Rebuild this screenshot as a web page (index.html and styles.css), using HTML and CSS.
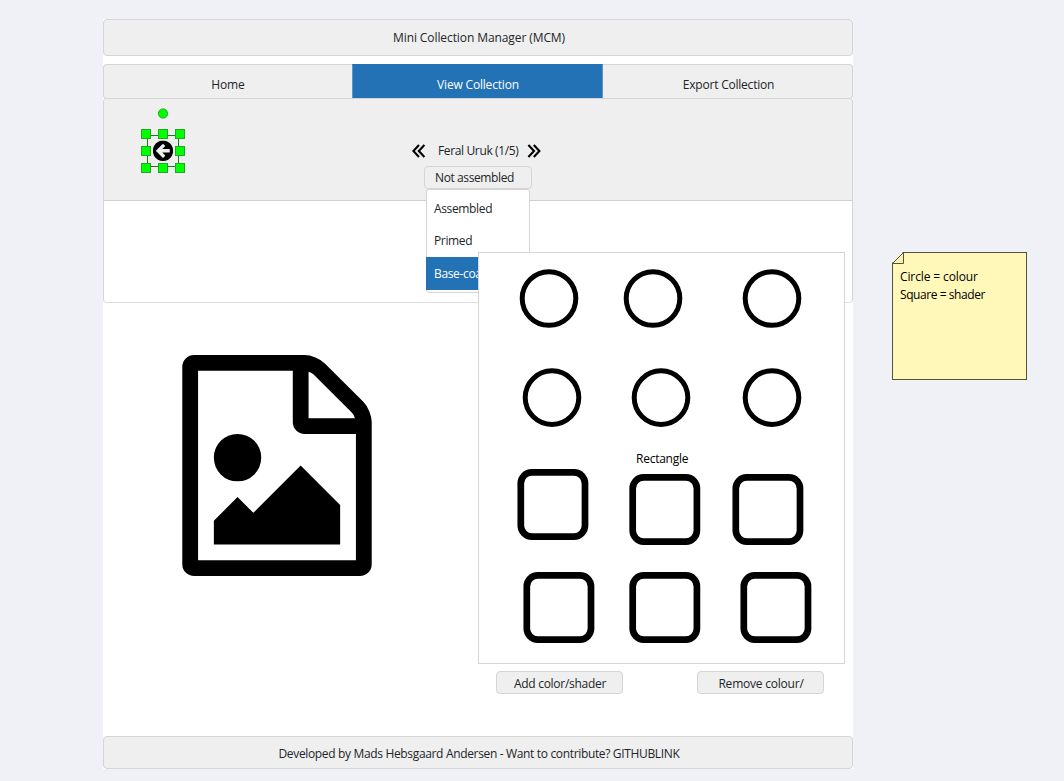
FILE: index.html
```html
<!DOCTYPE html>
<html lang="en">
<head>
<meta charset="utf-8">
<title>Mini Collection Manager (MCM)</title>
<link rel="stylesheet" href="styles.css">
</head>
<body>
<main class="page">
  <header class="bar title-bar"><span class="t-title">Mini Collection Manager (MCM)</span></header>
  <nav class="tabs">
    <a class="tab tab-first"><span class="t-home">Home</span></a>
    <a class="tab tab-active"><span class="t-view">View Collection</span></a>
    <a class="tab tab-last"><span class="t-export">Export Collection</span></a>
  </nav>
  <section class="card">
    <div class="card-head">
      <svg class="selection" width="48" height="68" viewBox="139 107 48 68">
        <rect class="sel-line" x="147.5" y="135.5" width="31" height="31"/>
        <svg x="152.8" y="140.6" width="20.4" height="20.4" viewBox="0 0 1536 1536"><path d="M1280 832v-128q0-26-19-45t-45-19h-502l189-189q19-19 19-45t-19-45l-91-91q-18-18-45-18t-45 18l-362 362-91 91q-18 18-18 45t18 45l91 91 362 362q18 18 45 18t45-18l91-91q18-18 18-45t-18-45l-189-189h502q26 0 45-19t19-45zM1536 768q0 209-103 385.5t-279.5 279.5-385.5 103-385.5-103-279.5-279.5-103-385.5 103-385.5 279.5-279.5 385.5-103 385.5 103 279.5 279.5 103 385.5z"/></svg>
        <g class="handle">
          <circle cx="163" cy="113.5" r="4.6"/>
          <rect x="141.5" y="129.5" width="9" height="9"/><rect x="158.5" y="129.5" width="9" height="9"/><rect x="175.5" y="129.5" width="9" height="9"/>
          <rect x="141.5" y="146.5" width="9" height="9"/><rect x="175.5" y="146.5" width="9" height="9"/>
          <rect x="141.5" y="163.5" width="9" height="9"/><rect x="158.5" y="163.5" width="9" height="9"/><rect x="175.5" y="163.5" width="9" height="9"/>
        </g>
      </svg>
      <div class="picker">
        <div class="pager">
          <svg class="chev" width="14" height="14" viewBox="0 0 14 14"><path d="M7 1L1.4 7L7 13M12.4 1L6.8 7L12.4 13"/></svg>
          <span class="t-name">Feral Uruk (1/5)</span>
          <svg class="chev" width="14" height="14" viewBox="0 0 14 14"><path d="M1.4 1L7 7L1.4 13M6.8 1L12.4 7L6.8 13"/></svg>
        </div>
        <div class="select"><span class="t-not">Not assembled</span>
          <ul class="menu">
            <li><span class="t-asm">Assembled</span></li>
            <li><span class="t-primed">Primed</span></li>
            <li class="chosen"><span class="t-base">Base-coated</span></li>
          </ul>
        </div>
      </div>
    </div>
  </section>
  <section class="content">
    <svg class="photo" width="190" height="221" viewBox="0 0 1536 1792"><path d="M1468 380q28 28 48 76t20 88v1152q0 40-28 68t-68 28h-1344q-40 0-68-28t-28-68v-1600q0-40 28-68t68-28h896q40 0 88 20t76 48zM1024 136v376h376q-10-29-22-41l-313-313q-12-12-41-22zM1408 1664v-1024h-416q-40 0-68-28t-28-68v-416h-768v1536h1280zM1280 1216v320h-1024v-192l192-192 128 128 384-384zM448 1024q-80 0-136-56t-56-136 56-136 136-56 136 56 56 136-56 136-136 56z"/></svg>
    <div class="palette">
      <svg class="shapes" width="365" height="410" viewBox="479 253 365 410">
        <g class="ring">
          <circle cx="549" cy="298.5" r="26.8"/><circle cx="653" cy="298.5" r="26.8"/><circle cx="772" cy="298.5" r="26.8"/>
          <circle cx="552" cy="397.6" r="26.8"/><circle cx="661" cy="397.6" r="26.8"/><circle cx="772" cy="397.6" r="26.8"/>
        </g>
        <g class="square">
          <rect x="520.8" y="472.4" width="64.2" height="64.2" rx="11"/><rect x="632.7" y="477.4" width="64.2" height="64.2" rx="11"/><rect x="735.8" y="477.4" width="64.2" height="64.2" rx="11"/>
          <rect x="526.8" y="575.4" width="64.2" height="64.2" rx="11"/><rect x="632.7" y="575.4" width="64.2" height="64.2" rx="11"/><rect x="743.8" y="575.4" width="64.2" height="64.2" rx="11"/>
        </g>
      </svg>
      <span class="palette-label t-rect">Rectangle</span>
    </div>
    <div class="actions">
      <button class="btn"><span class="t-add">Add color/shader</span></button>
      <button class="btn"><span class="t-rem">Remove colour/</span></button>
    </div>
  </section>
  <footer class="bar foot"><span class="t-foot">Developed by Mads Hebsgaard Andersen - Want to contribute? GITHUBLINK</span></footer>
</main>
<aside class="note">
  <svg class="fold" width="12" height="12" viewBox="0 0 12 12"><path class="cut" d="M0 0H11L0 11Z"/><path class="flap" d="M.5 11.5L11.5 .5V11.5Z"/></svg>
  <div class="t-n1">Circle = colour</div>
  <div class="t-n2">Square = shader</div>
</aside>
</body>
</html>
```
FILE: styles.css
```css
* { box-sizing: border-box; }
body {
  margin: 0;
  height: 781px;
  padding: 19px 0 0 103px;
  display: flex;
  align-items: flex-start;
  overflow: hidden;
  background: #f0f1f6;
  color: #212529;
  font: 12px/18px "Open Sans", "Noto Sans", sans-serif;
}
span { white-space: nowrap; }
.page { width: 750px; height: 750px; background: #fff; display: flex; flex-direction: column; }
.bar {
  display: flex; align-items: center; justify-content: center;
  padding-left: 2px;
  background: #efefef; border: 1px solid #d5d5d5; border-radius: 4px;
}
.title-bar { height: 37px; }
.tabs { margin-top: 8px; height: 35px; display: grid; grid-template-columns: 249px 251px 250px; }
.tab {
  display: flex; align-items: center; justify-content: center;
  padding-top: 6px;
  background: #efefef; border: 1px solid #d5d5d5; border-right: 0;
}
.tab-first { border-radius: 4px 0 0 4px; }
.tab-last { padding-left: 2px; border-left: 0; border-right: 1px solid #d5d5d5; border-radius: 0 4px 4px 0; }
.tab-active { padding-left: 1px; background: #2272b5; color: #fff; border: 1px solid #5f96c6; border-top-color: #2272b5; }
.card { height: 205px; margin-top: -1px; border: 1px solid #d5d5d5; border-bottom-color: #dfdfdf; border-radius: 4px; }
.card-head { height: 102px; display: flex; padding-left: 35px; background: #efefef; border-bottom: 1px solid #d0d0d0; border-radius: 3px 3px 0 0; }
.selection { margin-top: 8px; flex: none; }
.sel-line { fill: none; stroke: #128012; }
.handle { fill: #00ff00; stroke: #20a820; }
.picker { margin: 43px 0 0 225px; width: 130px; }
.pager { width: 128.5px; height: 18px; display: flex; align-items: center; justify-content: space-between; }
.chev { fill: none; stroke: #000; stroke-width: 2.1; flex: none; }
.select {
  position: relative; margin: 6px 0 0 12px; width: 108px; height: 23px; padding: 2px 0 0 10px;
  background: #efefef; border: 1px solid #d5d5d5; border-radius: 4px;
}
.menu {
  position: absolute; z-index: 1; left: 1px; top: 22px; width: 104px; height: 104px;
  margin: 0; padding: 3px 0 0; list-style: none;
  background: #fff; border: 1px solid #d5d5d5; border-radius: 3px;
}
.menu li { height: 32px; padding: 7px 0 0 7px; }
.menu .chosen { height: 33px; margin: 0 -1px; padding: 8px 0 0 8px; background: #2272b5; color: #fff; }
.content { height: 433px; display: grid; grid-template-columns: 375px 367px; grid-template-rows: 361px auto; }
.photo { margin: 52.4px 0 0 79.3px; fill: #000; }
.palette { position: relative; z-index: 2; margin-top: -51px; height: 412px; background: #fff; border: 1px solid #d5d5d5; }
.shapes { display: block; }
.ring { fill: none; stroke: #000; stroke-width: 5; }
.square { fill: none; stroke: #000; stroke-width: 6.7; }
.palette-label { position: absolute; left: 157px; top: 197px; color: #000; }
.actions { grid-column: 2; display: flex; gap: 74px; padding: 7px 0 0 18px; }
.btn {
  display: flex; align-items: center; justify-content: center;
  width: 127px; height: 23px; padding: 2px 0 0 1px; font: inherit; color: inherit;
  background: #efefef; border: 1px solid #d5d5d5; border-radius: 4px;
}
.foot { height: 33px; padding-top: 2px; }
.note {
  position: relative; margin: 233px 0 0 39px; width: 135px; height: 128px; padding: 15px 0 0 7px;
  background: #fff8b8; border: 1px solid #54533f; color: #000;
}
.fold { position: absolute; left: -1px; top: -1px; }
.cut { fill: #f0f1f6; }
.flap { fill: #fff0b0; stroke: #54533f; stroke-width: 1; }

/* tracking per label */
.t-title { letter-spacing: -0.09px; }
.t-home { letter-spacing: -0.1px; }
.t-view { letter-spacing: -0.18px; }
.t-export { letter-spacing: -0.22px; }
.t-name { margin-left: 4px; letter-spacing: -0.36px; }
.t-not { letter-spacing: -0.39px; }
.t-asm, .t-primed, .t-base { letter-spacing: -0.35px; }
.t-rect { letter-spacing: -0.25px; }
.t-add { letter-spacing: -0.28px; }
.t-rem { letter-spacing: -0.22px; }
.t-foot { letter-spacing: -0.34px; }
.t-n1 { letter-spacing: -0.12px; }
.t-n2 { letter-spacing: -0.43px; }
```
